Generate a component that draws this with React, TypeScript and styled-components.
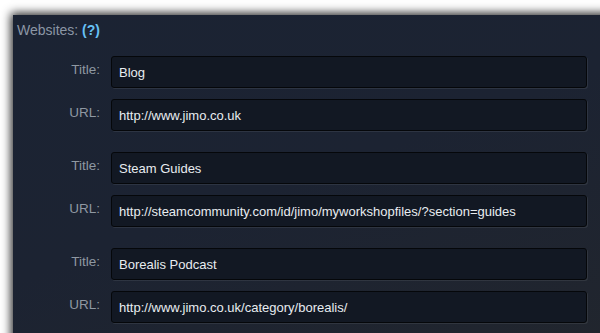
import React from 'react';
import styled, { createGlobalStyle } from 'styled-components';

const GlobalStyle = createGlobalStyle`
  html, body {
    margin: 0;
    padding: 0;
    background: #ffffff;
    overflow: hidden;
  }
  body {
    font-family: "Liberation Sans", Arial, sans-serif;
  }
`;

const Panel = styled.section`
  margin: 15px 0 0 13px;
  width: 640px;
  height: 360px;
  box-sizing: border-box;
  padding: 7px 0 0 4px;
  background: linear-gradient(160deg, #1b2333 0%, #1c2332 45%, #22262d 100%);
  box-shadow: 0 0 9px 2px rgba(0, 0, 0, 0.85);
`;

const Heading = styled.div`
  font-size: 14px;
  color: #8b96a5;
  line-height: 16px;
`;

const Help = styled.a`
  color: #67c1f5;
  font-weight: bold;
  text-decoration: none;
  cursor: help;
`;

const Groups = styled.div`
  display: flex;
  flex-direction: column;
  gap: 21px;
  margin-top: 18px;
`;

const Group = styled.div`
  display: flex;
  flex-direction: column;
  gap: 11px;
`;

const Row = styled.label`
  display: flex;
  align-items: center;
  gap: 11px;
`;

const Label = styled.span`
  width: 83px;
  text-align: right;
  font-size: 13.5px;
  color: #8f98a2;
  margin-top: -6px;
`;

const Field = styled.div`
  width: 476px;
  height: 32px;
  box-sizing: border-box;
  display: flex;
  align-items: center;
  padding: 1px 7px 0;
  border: 1px solid #05070a;
  border-radius: 3px;
  background: #121823;
  box-shadow: 1px 1px 0 rgba(255, 255, 255, 0.08);
  color: #e8ecf0;
  font-size: 13px;
  white-space: nowrap;
  overflow: hidden;
`;

const sites = [
  { title: 'Blog', url: 'http://www.jimo.co.uk' },
  { title: 'Steam Guides', url: 'http://steamcommunity.com/id/jimo/myworkshopfiles/?section=guides' },
  { title: 'Borealis Podcast', url: 'http://www.jimo.co.uk/category/borealis/' },
];

export default function App() {
  return (
    <>
      <GlobalStyle />
      <Panel>
        <Heading>
          Websites: <Help href="#">(?)</Help>
        </Heading>
        <Groups>
          {sites.map(site => (
            <Group key={site.title}>
              <Row>
                <Label>Title:</Label>
                <Field>{site.title}</Field>
              </Row>
              <Row>
                <Label>URL:</Label>
                <Field>{site.url}</Field>
              </Row>
            </Group>
          ))}
        </Groups>
      </Panel>
    </>
  );
}
